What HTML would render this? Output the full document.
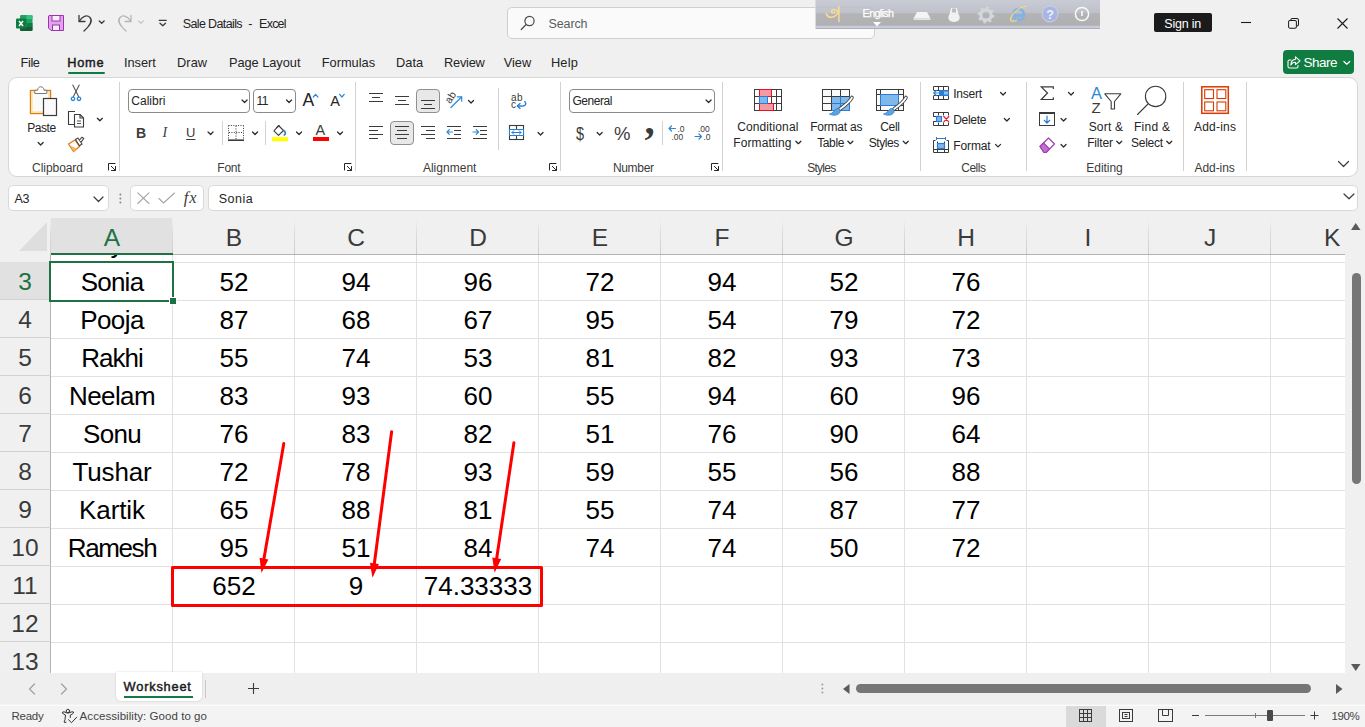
<!DOCTYPE html>
<html lang="en">
<head>
<meta charset="utf-8">
<title>Sale Datails - Excel</title>
<style>
*{box-sizing:border-box;margin:0;padding:0}
html,body{width:1365px;height:727px;overflow:hidden}
body{background:#f0f0f0;font-family:"Liberation Sans",sans-serif;color:#242424;position:relative;font-size:13px}
.a{position:absolute}
.t{position:absolute;white-space:nowrap;line-height:1;font-size:13px;letter-spacing:.25px;color:#242424}
svg{position:absolute;overflow:visible}
.c{text-align:center}
/* ribbon */
#ribbon{left:8px;top:77px;width:1350px;height:100px;background:#fff;border:1px solid #d6d6d6;border-radius:9px}
.sep{position:absolute;width:1px;background:#d2d2d2;top:82px;height:89px}
.gl{position:absolute;white-space:nowrap;line-height:1;font-size:13px;letter-spacing:.3px;color:#3b3b3b;top:160px}
.box{position:absolute;background:#fff;border:1px solid #8a8a8a;border-radius:4px}
/* grid */
#grid{left:0;top:218px;width:1345px;height:455px;background:#fff;overflow:hidden}
.ch{position:absolute;top:0;height:37px;background-color:#f0f0f0;background-image:linear-gradient(to bottom,#efefef 6%,#dcdcdc 45%,#cdcdcd 100%);background-size:1px 100%;background-position:right top;background-repeat:no-repeat;border-bottom:1px solid #b4b4b4;font-size:24.5px;line-height:39.500px;text-align:center;color:#3a3a3a}
.rh{position:absolute;left:0;width:51px;background:#f0f0f0;border-right:1px solid #b4b4b4;border-bottom:1px solid #d2d2d2;font-size:24.5px;text-align:center;color:#3a3a3a;height:38px;line-height:40px}
.vl{position:absolute;top:37px;width:1px;height:420px;background:#e1e1e1}
.hl{position:absolute;left:51px;width:1295px;height:1px;background:#e1e1e1}
.cell{position:absolute;width:122px;height:38px;line-height:40px;text-align:center;font-size:26px;color:#000;white-space:nowrap}
</style>
</head>
<body>
<!-- ===== TITLE BAR ===== -->
<div id="titlebar" class="a" style="left:0;top:0;width:1365px;height:46px">
<!-- excel logo -->
<svg style="left:16px;top:15px" width="17" height="17" viewBox="0 0 17 17">
<rect x="4" y="0" width="12.500" height="16" rx="1.200" fill="#21a366"/>
<path d="M10.500 0H15.300Q16.500 0 16.500 1.200V4H10.500Z" fill="#33c481"/>
<rect x="4" y="4" width="6.500" height="4" fill="#107c41"/>
<rect x="10.500" y="8" width="6" height="4" fill="#107c41"/>
<path d="M4 12H16.500V14.800Q16.500 16 15.300 16H5.200Q4 16 4 14.800Z" fill="#185c37"/>
<rect x="0" y="3.5" width="10" height="10" rx="1" fill="#107c41"/>
<path d="M3 6L7 11M7 6L3 11" stroke="#fff" stroke-width="1.5"/>
</svg>
<!-- save -->
<svg style="left:48px;top:15px" width="17" height="17" viewBox="0 0 17 17">
<path d="M1 .5H15.5V15.5H3L.5 13V1Z" fill="#dda6e6" stroke="#a42eb8" stroke-width="1"/>
<rect x="4" y=".5" width="8" height="5.5" fill="#f6eef8" stroke="#a42eb8"/>
<rect x="4.5" y="10" width="7" height="5.5" fill="#f6eef8" stroke="#a42eb8"/>
</svg>
<!-- undo -->
<svg style="left:77px;top:13px" width="30" height="20" viewBox="0 0 30 20" fill="none" stroke="#3b3b3b" stroke-width="1.3" stroke-linecap="round" stroke-linejoin="round">
<path d="M2 2.5V8.5H8"/><path d="M2.3 8.3C5 3 10 1.5 13 4.5C16 8 13.5 12 7 18"/>
<path d="M22.300 8L24.700 10.300L27.100 8" stroke-width="1.400"/>
</svg>
<!-- redo -->
<svg style="left:115px;top:13px" width="32" height="20" viewBox="0 0 32 20" fill="none" stroke="#b4b4b4" stroke-width="1.3" stroke-linecap="round" stroke-linejoin="round">
<path d="M16 2.5V8.5H10"/><path d="M15.7 8.3C13 3 8 1.5 5 4.5C2 8 4.5 12 11 18"/>
<path d="M23.500 8L25.900 10.300L28.300 8" stroke="#c8c8c8"/>
</svg>
<!-- customize -->
<svg style="left:158px;top:18px" width="10" height="10" viewBox="0 0 10 10" fill="none" stroke="#3b3b3b" stroke-width="1.3" stroke-linecap="round" stroke-linejoin="round">
<path d="M1.200 2.300H8.300"/><path d="M2 5.200L4.750 7.700L7.500 5.200"/>
</svg>
<div class="t" style="left:182.7px;top:18.3px;font-size:12.5px;letter-spacing:-0.62px">Sale Datails</div>
<div class="t" style="left:248.2px;top:18.3px;font-size:12.5px;letter-spacing:0.04px;letter-spacing:0">-</div>
<div class="t" style="left:259.1px;top:18.3px;font-size:12.5px;letter-spacing:-0.77px">Excel</div>
<!-- search -->
<div class="a" style="left:507px;top:7px;width:368px;height:32px;background:#fafafa;border:1px solid #cfcfcf;border-radius:5px"></div>
<svg style="left:520px;top:15px" width="16" height="16" viewBox="0 0 16 16" fill="none" stroke="#4a4a4a" stroke-width="1.2" stroke-linecap="round"><circle cx="9.5" cy="6" r="4.6"/><path d="M6.2 9.5L1.2 14.5"/></svg>
<div class="t" style="left:548.6px;top:18.3px;font-size:12.5px;letter-spacing:-0.13px;color:#5c5c5c">Search</div>
<!-- language bar overlay -->
<div class="a" style="left:815px;top:0;width:285px;height:29px;background:linear-gradient(#c5c8d2 0,#babdc6 44%,#aeaeb1 47%,#a9a9ab 87%,#c3c7d6 91%,#c6cad9 96%,#8f8f93 100%);opacity:.9;border-left:1px solid #d6d8de"></div>
<svg style="left:825px;top:5px" width="18" height="18" viewBox="0 0 18 18" fill="none" stroke="#f6dd92" stroke-width="1.500" stroke-linecap="round"><path d="M1.200 8.800C3.500 13.500 10 14 13.500 6.500"/><path d="M13.200 7C11 3.500 6.500 4 6.500 6.500C6.500 8.500 9 8.500 9.500 7"/><path d="M13.900 1.500V16.500"/></svg>
<div class="t" style="left:862.6px;top:7.8px;font-size:10.8px;letter-spacing:-0.65px;color:#fff;-webkit-text-stroke:.25px #fff">English</div>
<svg style="left:873px;top:22px" width="8" height="5"><path d="M0 0H8L4 4.5Z" fill="#fff"/></svg>
<svg style="left:913px;top:11px" width="18" height="10" viewBox="0 0 18 10"><path d="M4 1H14L17.5 7.5H.5Z" fill="#f4f4f4"/><path d="M.5 7.5H17.5V9H.5Z" fill="#e4e4e4"/></svg>
<svg style="left:947px;top:7px" width="14" height="16" viewBox="0 0 14 16"><path d="M4 1H10L11.5 7C14 11 12.5 15 7 15C1.500 15 0 11 2.500 7Z" fill="#f1f1f1"/><path d="M6 1.500V5.500M8 1.500V5.500" stroke="#888" stroke-width="1"/></svg>
<svg style="left:977px;top:6px" width="18" height="18" viewBox="0 0 18 18"><circle cx="9" cy="9" r="5.2" fill="none" stroke="#d4d6da" stroke-width="3.2"/><circle cx="9" cy="9" r="7.2" fill="none" stroke="#d4d6da" stroke-width="2.4" stroke-dasharray="2.6 3.05"/></svg>
<svg style="left:1009px;top:5px" width="20" height="18" viewBox="0 0 20 18" fill="none"><path d="M4.500 10.500H15C15 6 12.500 4 9.800 4C7 4 4.500 6 4.500 9.500C4.500 13 7 15 9.800 15C12 15 13.500 14 14.500 12.500" stroke="#7db3e8" stroke-width="2.600"/><path d="M17.500 1.500C12 0 2 9 1.500 14.500C1.500 17 5 16.500 8 15" stroke="#f1d68c" stroke-width="1.300"/></svg>
<svg style="left:1041px;top:5px" width="18" height="18" viewBox="0 0 18 18"><circle cx="9" cy="9" r="8" fill="#a9b6e2" stroke="#c9d0ec" stroke-width="1"/><text x="9" y="13.500" font-family="Liberation Sans, sans-serif" font-size="12.500" font-weight="bold" fill="#eef0fa" text-anchor="middle">?</text></svg>
<svg style="left:1074px;top:6px" width="16" height="16" viewBox="0 0 16 16" fill="none" stroke="#fafafa"><circle cx="8" cy="8" r="6.600" stroke-width="1.500"/><path d="M8 5V10" stroke-width="1.600"/></svg>
<!-- sign in -->
<div class="a" style="left:1154px;top:13px;width:58px;height:19px;background:#1b1b1b;border-radius:2px"></div>
<div class="t" style="left:1164.3px;top:17.5px;font-size:12.5px;letter-spacing:-0.20px;color:#fff">Sign in</div>
<!-- window buttons -->
<svg style="left:1240px;top:17px" width="12" height="12"><path d="M1 5.500H11" stroke="#1b1b1b" stroke-width="1.100"/></svg>
<svg style="left:1288px;top:17.500px" width="12" height="11" viewBox="0 0 13 12" fill="none" stroke="#1b1b1b" stroke-width="1.100"><rect x=".6" y="2.600" width="8.500" height="8.500" rx="1.600"/><path d="M3 2.400C3 1.200 3.800 .6 4.800 .6H9.500C10.800 .6 11.400 1.400 11.400 2.500V7C11.400 8 10.800 8.700 9.600 8.800"/></svg>
<svg style="left:1337px;top:17.500px" width="12" height="12"><path d="M.5 .5L10.500 10.500M10.500 .5L.5 10.500" stroke="#1b1b1b" stroke-width="1.100"/></svg>

</div><!--/titlebar-->
<!-- ===== TABS ===== -->
<div id="tabs" class="a" style="left:0;top:46px;width:1365px;height:31px">
<div class="t" style="left:20.6px;top:10.9px;font-size:12.8px;letter-spacing:-0.41px">File</div>
<div class="t" style="left:67.2px;top:10.9px;font-size:12.8px;letter-spacing:0.76px;color:#1b1b1b;-webkit-text-stroke:.45px #1b1b1b">Home</div>
<div class="t" style="left:123.9px;top:10.9px;font-size:12.8px;letter-spacing:-0.00px">Insert</div>
<div class="t" style="left:177.1px;top:10.9px;font-size:12.8px;letter-spacing:0.03px">Draw</div>
<div class="t" style="left:228.9px;top:10.9px;font-size:12.8px;letter-spacing:-0.03px">Page Layout</div>
<div class="t" style="left:321.7px;top:10.9px;font-size:12.8px;letter-spacing:0.02px">Formulas</div>
<div class="t" style="left:396.0px;top:10.9px;font-size:12.8px;letter-spacing:0.02px">Data</div>
<div class="t" style="left:444.1px;top:10.9px;font-size:12.8px;letter-spacing:-0.26px">Review</div>
<div class="t" style="left:503.7px;top:10.9px;font-size:12.8px;letter-spacing:0.02px">View</div>
<div class="t" style="left:550.9px;top:10.9px;font-size:12.8px;letter-spacing:0.22px">Help</div>
<div class="a" style="left:67.500px;top:25.700px;width:37px;height:2.400px;border-radius:1.200px;background:#107c41"></div>
<!-- share -->
<div class="a" style="left:1283px;top:4px;width:71px;height:24px;background:#107c41;border-radius:4px"></div>
<svg style="left:1287px;top:10px" width="14" height="13" viewBox="0 0 14 13" fill="none" stroke="#fff" stroke-width="1.100" stroke-linejoin="round" stroke-linecap="round"><path d="M4 4H2.500C1.600 4 1 4.600 1 5.500V10.500C1 11.400 1.600 12 2.500 12H9.500C10.400 12 11 11.400 11 10.500V9.500"/><path d="M8.500 .8L13 4.800L8.500 8.600V6.300C6 6.300 4.600 7.300 3.800 9C4 5.800 5.800 3.600 8.500 3.300Z"/></svg>
<div class="t" style="left:1303.6px;top:9.5px;font-size:13.5px;letter-spacing:-0.54px;color:#fff">Share</div>
<svg style="left:1342px;top:14px" width="9" height="6" fill="none" stroke="#fff" stroke-width="1.200" stroke-linecap="round" stroke-linejoin="round"><path d="M1.900 1.500L4.800 4.200L7.700 1.500"/></svg>

</div><!--/tabs-->
<!-- ===== RIBBON ===== -->
<div id="ribbon" class="a"></div>
<div id="rc" class="a" style="left:0;top:0;width:1365px;height:0">
<svg style="left:29px;top:85px" width="29" height="32" viewBox="0 0 29 32" fill="none">
<rect x="1.500" y="5.500" width="20" height="23" fill="#fafafa" stroke="#e07b10" stroke-width="1.400"/>
<rect x="3" y="7" width="17" height="20" fill="none" stroke="#fbe3a8" stroke-width="1.400"/>
<path d="M5.800 8.500V5.200H8.600C8.600 0.600 15 0.600 15 5.200H17.800V8.500Z" fill="#fff" stroke="#7a7a7a" stroke-width="1"/>
<rect x="14.500" y="13.500" width="13" height="17" fill="#fafafa" stroke="#3b3b3b" stroke-width="1.200"/>
</svg>
<div class="t" style="left:27.3px;top:122.4px;font-size:12px;letter-spacing:-0.48px">Paste</div>
<svg style="left:37px;top:141px" width="9" height="6" fill="none" stroke="#2a2a2a" stroke-width="1.25" stroke-linecap="round" stroke-linejoin="round"><path d="M1.15 1.50L3.65 4.00L6.15 1.50"/></svg>
<svg style="left:70px;top:84px" width="12" height="18" viewBox="0 0 12 18" fill="none" stroke-linecap="round">
<path d="M2.800 1L8.800 13" stroke="#555" stroke-width="1.100"/><path d="M9.200 1L3.200 13" stroke="#555" stroke-width="1.100"/>
<circle cx="3" cy="14.800" r="1.700" stroke="#2b88d8" stroke-width="1.300"/><circle cx="9" cy="14.800" r="1.700" stroke="#2b88d8" stroke-width="1.300"/></svg>
<svg style="left:67px;top:110px" width="18" height="18" viewBox="0 0 18 18" fill="none" stroke="#3b3b3b" stroke-width="1.100" stroke-linejoin="round">
<path d="M7 14.500H1.500V1.500H8"/><path d="M7.500 4.500H13L16.500 8V17H7.500Z" fill="#fff"/><path d="M13 4.500V8H16.500"/><path d="M10 11H14M10 13.500H14" stroke-width=".9"/></svg>
<svg style="left:96px;top:117px" width="9" height="6" fill="none" stroke="#2a2a2a" stroke-width="1.25" stroke-linecap="round" stroke-linejoin="round"><path d="M1.35 1.30L3.85 3.80L6.35 1.30"/></svg>
<svg style="left:67px;top:136px" width="18" height="17" viewBox="0 0 18 17" fill="none" stroke-linejoin="round" stroke-linecap="round">
<path d="M1.500 8L8 4L12.500 10.500L6.500 15.500Z" fill="#fff" stroke="#e07b10" stroke-width="1.300"/>
<path d="M3.500 9.500L9.500 12.800L6.500 15.500Z" fill="#f5b565" stroke="none"/>
<path d="M8.500 3.500L11 2L15 8L12.500 9.800Z" fill="#fff" stroke="#444" stroke-width="1.100"/>
<path d="M12.500 4L15 1.200L16.800 2.500L14.300 5.800" stroke="#444" stroke-width="1.100" fill="#fff"/></svg>
<div class="gl" style="left:32.1px;top:161.9px;font-size:12px;letter-spacing:-0.06px">Clipboard</div>
<svg style="left:108px;top:163px" width="9" height="9" viewBox="0 0 9 9" fill="none" stroke="#262626" stroke-width="1" stroke-linecap="round" stroke-linejoin="round"><path d="M.5 7V.5H7"/><path d="M3.300 3.300L7.300 7.300"/><path d="M7.500 3.500V7.500H3.500"/></svg>
<div class="sep" style="left:119px"></div>
<div class="box" style="left:128px;top:89px;width:122px;height:24px"></div>
<div class="t" style="left:131.3px;top:95.2px;font-size:12px;letter-spacing:0.01px">Calibri</div>
<svg style="left:241px;top:99px" width="9" height="6" fill="none" stroke="#2a2a2a" stroke-width="1.25" stroke-linecap="round" stroke-linejoin="round"><path d="M1.05 1.00L3.55 3.50L6.05 1.00"/></svg>
<div class="box" style="left:253px;top:89px;width:43px;height:24px"></div>
<div class="t" style="left:256.4px;top:95.2px;font-size:12px;letter-spacing:-0.48px">11</div>
<svg style="left:285px;top:99px" width="9" height="6" fill="none" stroke="#2a2a2a" stroke-width="1.25" stroke-linecap="round" stroke-linejoin="round"><path d="M1.55 1.00L4.05 3.50L6.55 1.00"/></svg>
<div class="t" style="left:302.6px;top:91.6px;font-size:17.5px;letter-spacing:-0.07px;letter-spacing:0">A</div>
<svg style="left:312px;top:93px" width="8" height="6" fill="none" stroke="#2b88d8" stroke-width="1.200" stroke-linecap="round" stroke-linejoin="round"><path d="M1.300 4L3.600 1.300L5.900 4"/></svg>
<div class="t" style="left:330.2px;top:94.1px;font-size:14.5px;letter-spacing:0.03px;letter-spacing:0">A</div>
<svg style="left:338px;top:93px" width="8" height="6" fill="none" stroke="#2b88d8" stroke-width="1.200" stroke-linecap="round" stroke-linejoin="round"><path d="M1.600 1.300L3.900 4L6.200 1.300"/></svg>
<div class="t" style="left:136.1px;top:125.8px;font-size:14px;letter-spacing:-0.80px;font-weight:bold;color:#3b3b3b">B</div>
<div class="t" style="left:162.6px;top:125.8px;font-size:14px;letter-spacing:0.80px;font-style:italic;font-family:'Liberation Serif',serif;color:#3b3b3b">I</div>
<div class="t" style="left:186.1px;top:126.4px;font-size:13px;letter-spacing:-0.09px;color:#3b3b3b;text-decoration:underline;text-underline-offset:1.500px">U</div>
<svg style="left:207px;top:131px" width="9" height="6" fill="none" stroke="#2a2a2a" stroke-width="1.25" stroke-linecap="round" stroke-linejoin="round"><path d="M1.05 1.00L3.55 3.50L6.05 1.00"/></svg>
<div class="sep" style="left:222px;top:121px;height:24px"></div>
<svg style="left:228px;top:125px" width="16" height="16" viewBox="0 0 16 16" fill="none" stroke="#3b3b3b">
<path d="M.5 .5H15.500M.5 .5V15M15.500 .5V15M8 1V15M1 7.500H15.500" stroke-width="1" stroke-dasharray="1 1.400"/>
<path d="M0 15.200H16" stroke-width="1.600"/></svg>
<svg style="left:251px;top:131px" width="9" height="6" fill="none" stroke="#2a2a2a" stroke-width="1.25" stroke-linecap="round" stroke-linejoin="round"><path d="M1.55 1.00L4.05 3.50L6.55 1.00"/></svg>
<div class="sep" style="left:265px;top:121px;height:24px"></div>
<svg style="left:271px;top:124px" width="18" height="18" viewBox="0 0 18 18" fill="none" stroke-linejoin="round" stroke-linecap="round">
<path d="M7.500 1.500L12.500 6.500L7.500 11.300L3 6.800Z" stroke="#3b3b3b" stroke-width="1.100" fill="#fff"/>
<path d="M5.500 4L8 1.500" stroke="#3b3b3b" stroke-width="1.100"/>
<path d="M12.800 6.500C14.800 8 14.800 10 13.300 11" stroke="#2b7cd3" stroke-width="1.600"/>
<rect x="1" y="13.200" width="16" height="4" fill="#ffff00"/></svg>
<svg style="left:295px;top:131px" width="9" height="6" fill="none" stroke="#2a2a2a" stroke-width="1.25" stroke-linecap="round" stroke-linejoin="round"><path d="M1.55 1.00L4.05 3.50L6.55 1.00"/></svg>
<div class="t" style="left:315.6px;top:123.3px;font-size:14.5px;letter-spacing:0.80px;color:#3b3b3b;letter-spacing:0">A</div>
<div class="a" style="left:313px;top:137px;width:16px;height:4px;background:#ff0000"></div>
<svg style="left:336px;top:131px" width="9" height="6" fill="none" stroke="#2a2a2a" stroke-width="1.25" stroke-linecap="round" stroke-linejoin="round"><path d="M1.55 1.00L4.05 3.50L6.55 1.00"/></svg>
<div class="gl" style="left:217.3px;top:161.9px;font-size:12px;letter-spacing:-0.23px">Font</div>
<svg style="left:344px;top:163px" width="9" height="9" viewBox="0 0 9 9" fill="none" stroke="#262626" stroke-width="1" stroke-linecap="round" stroke-linejoin="round"><path d="M.5 7V.5H7"/><path d="M3.300 3.300L7.300 7.300"/><path d="M7.500 3.500V7.500H3.500"/></svg>
<div class="sep" style="left:355px"></div><svg style="left:369px;top:92px" width="14" height="11" fill="none" stroke="#3b3b3b" stroke-width="1" shape-rendering="crispEdges"><path d="M0 1.5H14M3 5.5H11M0 9.5H14"/></svg>
<svg style="left:395px;top:95px" width="14" height="11" fill="none" stroke="#3b3b3b" stroke-width="1" shape-rendering="crispEdges"><path d="M0 1.5H14M3 5.5H11M0 9.5H14"/></svg>
<div class="box" style="left:416px;top:89px;width:24px;height:24px;background:#e8e8e8;border-color:#8f8f8f"></div>
<svg style="left:421px;top:99px" width="14" height="11" fill="none" stroke="#3b3b3b" stroke-width="1" shape-rendering="crispEdges"><path d="M0 1.5H14M3 5.5H11M0 9.5H14"/></svg>
<svg style="left:445px;top:91px" width="20" height="19" viewBox="0 0 20 19" fill="none">
<text x="0" y="0" transform="translate(5.300 13.300) rotate(-58)" font-family="Liberation Sans, sans-serif" font-size="10.500" fill="#3b3b3b">ab</text>
<path d="M6 16.500L16.500 6" stroke="#2b88d8" stroke-width="1.200" stroke-linecap="round"/><path d="M12.300 5.800H16.700V10.200" stroke="#2b88d8" stroke-width="1.200" stroke-linecap="round" stroke-linejoin="round"/></svg>
<svg style="left:467px;top:99px" width="9" height="6" fill="none" stroke="#2a2a2a" stroke-width="1.25" stroke-linecap="round" stroke-linejoin="round"><path d="M1.55 1.50L4.05 4.00L6.55 1.50"/></svg>
<div class="sep" style="left:498px;top:88px;height:62px"></div>
<svg style="left:510px;top:92px" width="18" height="18" viewBox="0 0 18 18" fill="none">
<text x="1" y="9" font-family="Liberation Sans, sans-serif" font-size="10" fill="#3b3b3b" letter-spacing=".5">ab</text>
<text x="1" y="16.300" font-family="Liberation Sans, sans-serif" font-size="10" fill="#3b3b3b">c</text>
<path d="M14.800 9.500C17 11.500 15.500 14.500 12 14H7.500" stroke="#2b7cd3" stroke-width="1.300" stroke-linecap="round"/><path d="M10 11.500L7.300 14L10 16.500" stroke="#2b7cd3" stroke-width="1.300" stroke-linecap="round" stroke-linejoin="round"/></svg>
<svg style="left:369px;top:125px" width="14" height="15" fill="none" stroke="#3b3b3b" stroke-width="1" shape-rendering="crispEdges"><path d="M0 1.5H14M0 5.5H9M0 9.5H14M0 13.5H9"/></svg>
<div class="box" style="left:390px;top:121px;width:24px;height:24px;background:#e8e8e8;border-color:#8f8f8f"></div>
<svg style="left:395px;top:125px" width="14" height="15" fill="none" stroke="#3b3b3b" stroke-width="1" shape-rendering="crispEdges"><path d="M0 1.5H14M2 5.5H12M0 9.5H14M2 13.5H12"/></svg>
<svg style="left:421px;top:125px" width="14" height="15" fill="none" stroke="#3b3b3b" stroke-width="1" shape-rendering="crispEdges"><path d="M0 1.5H14M5 5.5H14M0 9.5H14M5 13.5H14"/></svg>
<svg style="left:447px;top:125px" width="14" height="15" fill="none" stroke="#3b3b3b" stroke-width="1" shape-rendering="crispEdges"><path d="M0 1.5H14M7 5.5H14M7 9.5H14M0 13.5H14"/></svg>
<svg style="left:446px;top:128px" width="8" height="8" fill="none" stroke="#2b88d8" stroke-width="1.200" stroke-linecap="round" stroke-linejoin="round"><path d="M1 4H6.500M3.300 1.700L1 4L3.300 6.300"/></svg>
<svg style="left:473px;top:125px" width="14" height="15" fill="none" stroke="#3b3b3b" stroke-width="1" shape-rendering="crispEdges"><path d="M0 1.5H14M7 5.5H14M7 9.5H14M0 13.5H14"/></svg>
<svg style="left:472px;top:128px" width="8" height="8" fill="none" stroke="#2b88d8" stroke-width="1.200" stroke-linecap="round" stroke-linejoin="round"><path d="M1 4H6.500M4.200 1.700L6.500 4L4.200 6.300"/></svg>
<svg style="left:508px;top:124px" width="17" height="17" viewBox="0 0 17 17" fill="none">
<rect x="1.500" y="1.500" width="14" height="14" stroke="#3b3b3b" stroke-width="1.100"/><path d="M8.500 1.500V5M8.500 12V15.500" stroke="#3b3b3b" stroke-width="1.100"/>
<rect x="1.500" y="5.500" width="14" height="6" fill="#fff" stroke="#2b7cd3" stroke-width="1"/>
<path d="M4 8.500H13M5.800 6.700L4 8.500L5.800 10.300M11.200 6.700L13 8.500L11.200 10.300" stroke="#2b7cd3" stroke-width="1" stroke-linecap="round" stroke-linejoin="round"/></svg>
<svg style="left:537px;top:131px" width="9" height="6" fill="none" stroke="#2a2a2a" stroke-width="1.25" stroke-linecap="round" stroke-linejoin="round"><path d="M1.05 1.50L3.55 4.00L6.05 1.50"/></svg>
<div class="gl" style="left:422.9px;top:161.9px;font-size:12px;letter-spacing:0.02px">Alignment</div>
<svg style="left:549px;top:163px" width="9" height="9" viewBox="0 0 9 9" fill="none" stroke="#262626" stroke-width="1" stroke-linecap="round" stroke-linejoin="round"><path d="M.5 7V.5H7"/><path d="M3.300 3.300L7.300 7.300"/><path d="M7.500 3.500V7.500H3.500"/></svg>
<div class="sep" style="left:560px"></div>
<div class="box" style="left:569px;top:89px;width:146px;height:24px"></div>
<div class="t" style="left:572.5px;top:95.2px;font-size:12px;letter-spacing:-0.46px">General</div>
<svg style="left:705px;top:99px" width="9" height="6" fill="none" stroke="#2a2a2a" stroke-width="1.25" stroke-linecap="round" stroke-linejoin="round"><path d="M1.05 1.00L3.55 3.50L6.05 1.00"/></svg>
<div class="t" style="left:576.0px;top:128.1px;font-size:14.5px;letter-spacing:0.54px;color:#3b3b3b;letter-spacing:0;transform:scaleY(1.3);transform-origin:50% 85%">$</div>
<svg style="left:596px;top:131px" width="9" height="6" fill="none" stroke="#2a2a2a" stroke-width="1.25" stroke-linecap="round" stroke-linejoin="round"><path d="M1.15 1.50L3.65 4.00L6.15 1.50"/></svg>
<div class="t" style="left:614.1px;top:125.0px;font-size:18.5px;letter-spacing:-0.55px;color:#3b3b3b;letter-spacing:0">%</div>
<div class="t" style="left:644.4px;top:100.0px;font-size:41px;letter-spacing:-0.75px;font-weight:bold;font-family:'Liberation Serif',serif;color:#3b3b3b;letter-spacing:0">,</div>
<div class="sep" style="left:662px;top:121px;height:24px"></div>
<svg style="left:668px;top:124px" width="18" height="17" viewBox="0 0 18 17" fill="none">
<text x="9.500" y="7.500" font-family="Liberation Sans, sans-serif" font-size="8.500" fill="#3b3b3b">.0</text>
<text x="3.500" y="15.500" font-family="Liberation Sans, sans-serif" font-size="8.500" fill="#3b3b3b">.00</text>
<path d="M1 4.500H7.500M3.500 2L1 4.500L3.500 7" stroke="#2b88d8" stroke-width="1.200" stroke-linecap="round" stroke-linejoin="round"/></svg>
<svg style="left:694px;top:124px" width="18" height="17" viewBox="0 0 18 17" fill="none">
<text x="4" y="7.500" font-family="Liberation Sans, sans-serif" font-size="8.500" fill="#3b3b3b">.00</text>
<text x="9.500" y="15.500" font-family="Liberation Sans, sans-serif" font-size="8.500" fill="#3b3b3b">.0</text>
<path d="M1 12.500H7.500M5 10L7.500 12.500L5 15" stroke="#2b88d8" stroke-width="1.200" stroke-linecap="round" stroke-linejoin="round"/></svg>
<div class="gl" style="left:612.9px;top:161.9px;font-size:12px;letter-spacing:-0.31px">Number</div>
<svg style="left:711px;top:163px" width="9" height="9" viewBox="0 0 9 9" fill="none" stroke="#262626" stroke-width="1" stroke-linecap="round" stroke-linejoin="round"><path d="M.5 7V.5H7"/><path d="M3.300 3.300L7.300 7.300"/><path d="M7.500 3.500V7.500H3.500"/></svg>
<div class="sep" style="left:722px"></div><svg style="left:754px;top:89px" width="28" height="22" viewBox="0 0 28 22" fill="none">
<rect x=".5" y=".5" width="27" height="21" fill="#fff" stroke="#3b3b3b" stroke-width="1"/>
<path d="M5.500 .5V21.500M17.500 .5V21.500M22.500 .5V21.500M.5 7.500H27.500M.5 14.500H27.500" stroke="#3b3b3b" stroke-width="1"/>
<rect x="5.500" y=".5" width="12" height="7" fill="#f59aa3" stroke="#e81123" stroke-width="1"/>
<rect x="5.500" y="14.500" width="14" height="7" fill="#f59aa3" stroke="#e81123" stroke-width="1"/>
<rect x="5.500" y="7.500" width="8" height="7" fill="#7fb8ea" stroke="#2b7cd3" stroke-width="1"/>
</svg>
<div class="t" style="left:737.2px;top:121.4px;font-size:12px;letter-spacing:0.11px">Conditional</div>
<div class="t" style="left:733.3px;top:137.3px;font-size:12px;letter-spacing:0.09px">Formatting</div>
<svg style="left:794px;top:140px" width="9" height="6" fill="none" stroke="#2a2a2a" stroke-width="1.25" stroke-linecap="round" stroke-linejoin="round"><path d="M1.85 1.20L4.35 3.70L6.85 1.20"/></svg>
<svg style="left:822px;top:89px" width="33" height="28" viewBox="0 0 33 28" fill="none">
<rect x=".5" y=".5" width="27" height="21" fill="#fafafa" stroke="#3b3b3b" stroke-width="1"/>
<rect x="9.500" y="7.500" width="18" height="14" fill="#7fb8ea" stroke="#2b7cd3" stroke-width="1"/>
<path d="M9.500 .5V21.500M18.500 .5V7.500M.5 7.500H27.500M.5 14.500H9.500" stroke="#3b3b3b" stroke-width="1"/>
<path d="M18.500 7.500V21.500M9.500 14.500H27.500" stroke="#2b7cd3" stroke-width="1"/>
<path d="M30 8.500C28 12.500 23 16.500 18 20" stroke="#3b3b3b" stroke-width="3.600" stroke-linecap="round"/>
<path d="M30 8.500C28 12.500 23 16.500 18 20" stroke="#fff" stroke-width="1.700" stroke-linecap="round"/>
<path d="M7.500 25C11 24.500 12 21.500 14 20C16.500 18.500 19.500 21 17.500 24C15 27 10 26.500 7.500 25Z" fill="#5ea3e0" stroke="#2b7cd3" stroke-width=".8"/>
</svg>
<div class="t" style="left:810.2px;top:121.4px;font-size:12px;letter-spacing:-0.21px">Format as</div>
<div class="t" style="left:817.2px;top:137.3px;font-size:12px;letter-spacing:-0.38px">Table</div>
<svg style="left:846px;top:140px" width="9" height="6" fill="none" stroke="#2a2a2a" stroke-width="1.25" stroke-linecap="round" stroke-linejoin="round"><path d="M1.85 1.20L4.35 3.70L6.85 1.20"/></svg>
<svg style="left:876px;top:89px" width="33" height="28" viewBox="0 0 33 28" fill="none">
<rect x=".5" y=".5" width="27" height="21" fill="#fafafa" stroke="#3b3b3b" stroke-width="1"/>
<path d="M4.500 .5V21.500M22.500 .5V21.500M.5 5.500H27.500M.5 16.500H27.500" stroke="#3b3b3b" stroke-width="1"/>
<rect x="4.500" y="5.500" width="18" height="11" fill="#7fb8ea" stroke="#2b7cd3" stroke-width="1"/>
<path d="M30 8.500C28 12.500 23 16.500 18 20" stroke="#3b3b3b" stroke-width="3.600" stroke-linecap="round"/>
<path d="M30 8.500C28 12.500 23 16.500 18 20" stroke="#fff" stroke-width="1.700" stroke-linecap="round"/>
<path d="M7.500 25C11 24.500 12 21.500 14 20C16.500 18.500 19.500 21 17.500 24C15 27 10 26.500 7.500 25Z" fill="#5ea3e0" stroke="#2b7cd3" stroke-width=".8"/>
</svg>
<div class="t" style="left:880.2px;top:121.4px;font-size:12px;letter-spacing:-0.32px">Cell</div>
<div class="t" style="left:868.8px;top:137.3px;font-size:12px;letter-spacing:-0.43px">Styles</div>
<svg style="left:902px;top:140px" width="9" height="6" fill="none" stroke="#2a2a2a" stroke-width="1.25" stroke-linecap="round" stroke-linejoin="round"><path d="M1.25 1.20L3.75 3.70L6.25 1.20"/></svg>
<div class="gl" style="left:807.3px;top:161.9px;font-size:12px;letter-spacing:-0.76px">Styles</div>
<div class="sep" style="left:920px"></div>
<svg style="left:933px;top:86px" width="17" height="14" viewBox="0 0 17 14" fill="none">
<path d="M.5 4V.5H15.500V13.500H.5V10" stroke="#3b3b3b" stroke-width="1"/><path d="M5.500 .5V4M10.500 .5V4M5.500 10V13.500M10.500 10V13.500M.5 4.500H6M.5 9.500H6" stroke="#3b3b3b" stroke-width="1"/>
<rect x="0" y="5" width="6" height="4" fill="#fff"/>
<rect x="6.500" y="4.500" width="9" height="5" fill="#2b7cd3" stroke="#2b7cd3" stroke-width="1"/><rect x="11" y="5.500" width="4" height="3" fill="#8fc1ee"/>
<path d="M.8 7H8M3.300 4.500L.8 7L3.300 9.500" stroke="#2b88d8" stroke-width="1.200" stroke-linecap="round" stroke-linejoin="round"/></svg>
<div class="t" style="left:953.2px;top:88.2px;font-size:12px;letter-spacing:-0.24px">Insert</div>
<svg style="left:999px;top:91px" width="9" height="6" fill="none" stroke="#2a2a2a" stroke-width="1.25" stroke-linecap="round" stroke-linejoin="round"><path d="M1.55 1.50L4.05 4.00L6.55 1.50"/></svg>
<svg style="left:933px;top:112px" width="17" height="14" viewBox="0 0 17 14" fill="none">
<path d="M.5 4V.5H15.500V4M.5 10V13.500H15.500V10" stroke="#3b3b3b" stroke-width="1"/><path d="M5.500 .5V4M10.500 .5V4M5.500 10V13.500M10.500 10V13.500M.5 4.500H15.500M.5 9.500H15.500M.5 4.500H3.500V9.500H.5" stroke="#3b3b3b" stroke-width="1"/>
<rect x="2.500" y="3.500" width="14" height="7" fill="#fff"/><path d="M.5 4.500H3M.5 9.500H3" stroke="#3b3b3b"/>
<rect x="3.500" y="4.500" width="5" height="5" fill="#7fb8ea" stroke="#2b7cd3" stroke-width="1.200"/>
<path d="M10.800 4.500L15.800 9.800M15.800 4.500L10.800 9.800" stroke="#e8212e" stroke-width="1.200" stroke-linecap="round"/></svg>
<div class="t" style="left:953.2px;top:114.3px;font-size:12px;letter-spacing:-0.28px">Delete</div>
<svg style="left:1003px;top:117px" width="9" height="6" fill="none" stroke="#2a2a2a" stroke-width="1.25" stroke-linecap="round" stroke-linejoin="round"><path d="M1.35 1.50L3.85 4.00L6.35 1.50"/></svg>
<svg style="left:933px;top:137px" width="17" height="16" viewBox="0 0 17 16" fill="none">
<path d="M3.500 1.500H12.500M3.500 0V3M12.500 0V3" stroke="#2b7cd3" stroke-width="1"/>
<path d="M2.500 3.500H.5V15.500H15.500V3.500H13.500" stroke="#3b3b3b" stroke-width="1"/><path d="M4.500 4.500V15.500M11.500 4.500V15.500M.5 12.500H15.500" stroke="#3b3b3b" stroke-width="1"/>
<rect x="4.500" y="6.500" width="7" height="5" fill="#7fb8ea" stroke="#2b7cd3" stroke-width="1.200"/></svg>
<div class="t" style="left:953.2px;top:140.2px;font-size:12px;letter-spacing:-0.10px">Format</div>
<svg style="left:994px;top:143px" width="9" height="6" fill="none" stroke="#2a2a2a" stroke-width="1.25" stroke-linecap="round" stroke-linejoin="round"><path d="M1.55 1.40L4.05 3.90L6.55 1.40"/></svg>
<div class="gl" style="left:961.3px;top:161.9px;font-size:12px;letter-spacing:-0.51px">Cells</div>
<div class="sep" style="left:1026px"></div>
<svg style="left:1040px;top:86px" width="15" height="15" viewBox="0 0 15 15" fill="none" stroke="#3b3b3b" stroke-width="1.200" stroke-linejoin="miter"><path d="M13.300 3V.8H1.300L7.500 7L1.300 13.500H13.300V11.300"/></svg>
<svg style="left:1067px;top:91px" width="9" height="6" fill="none" stroke="#2a2a2a" stroke-width="1.25" stroke-linecap="round" stroke-linejoin="round"><path d="M1.55 1.50L4.05 4.00L6.55 1.50"/></svg>
<svg style="left:1039px;top:112px" width="17" height="15" viewBox="0 0 17 15" fill="none">
<rect x=".5" y=".5" width="15" height="13" stroke="#3b3b3b" stroke-width="1"/><path d="M0 1H16" stroke="#3b3b3b" stroke-width="2"/>
<path d="M8 4V11M5.200 8.300L8 11L10.800 8.300" stroke="#2b7cd3" stroke-width="1.200" stroke-linecap="round" stroke-linejoin="round"/></svg>
<svg style="left:1060px;top:117px" width="9" height="6" fill="none" stroke="#2a2a2a" stroke-width="1.25" stroke-linecap="round" stroke-linejoin="round"><path d="M1.05 1.50L3.55 4.00L6.05 1.50"/></svg>
<svg style="left:1038.500px;top:137px" width="17" height="16" viewBox="0 0 17 16" fill="none" stroke-linejoin="round">
<path d="M1 9.500L9.500 1L15.500 7L7 15.500H5Z" fill="#fff" stroke="#a33fb5" stroke-width="1.200"/>
<path d="M1 9.500L4.500 6L10.500 12L7 15.500H5Z" fill="#c36fd0" stroke="#a33fb5" stroke-width="1.200"/></svg>
<svg style="left:1060px;top:143px" width="9" height="6" fill="none" stroke="#2a2a2a" stroke-width="1.25" stroke-linecap="round" stroke-linejoin="round"><path d="M1.05 1.50L3.55 4.00L6.05 1.50"/></svg>
<div class="t" style="left:1091.1px;top:85.2px;font-size:16.5px;letter-spacing:0.29px;color:#2b88d8;letter-spacing:0">A</div>
<div class="t" style="left:1091.6px;top:100.0px;font-size:15px;letter-spacing:0.14px;color:#3b3b3b;letter-spacing:0">Z</div>
<svg style="left:1103.500px;top:92.500px" width="18" height="17" viewBox="0 0 18 17" fill="none" stroke="#3b3b3b" stroke-width="1.100" stroke-linejoin="round"><path d="M.8 .8H16.800L10.500 8.500V16H7.200V8.500Z" fill="#fff"/></svg>
<div class="t" style="left:1088.7px;top:121.4px;font-size:12px;letter-spacing:0.18px">Sort &amp;</div>
<div class="t" style="left:1087.2px;top:137.3px;font-size:12px;letter-spacing:-0.16px">Filter</div>
<svg style="left:1115px;top:140px" width="9" height="6" fill="none" stroke="#2a2a2a" stroke-width="1.25" stroke-linecap="round" stroke-linejoin="round"><path d="M1.75 1.20L4.25 3.70L6.75 1.20"/></svg>
<svg style="left:1136px;top:85px" width="32" height="31" viewBox="0 0 32 31" fill="none" stroke="#3b3b3b" stroke-width="1.100" stroke-linecap="round"><circle cx="19.600" cy="11.400" r="10.200" fill="#fff"/><path d="M12 19L1.500 29.500"/></svg>
<div class="t" style="left:1134.0px;top:121.4px;font-size:12px;letter-spacing:0.25px">Find &amp;</div>
<div class="t" style="left:1131.0px;top:137.3px;font-size:12px;letter-spacing:-0.24px">Select</div>
<svg style="left:1165px;top:140px" width="9" height="6" fill="none" stroke="#2a2a2a" stroke-width="1.25" stroke-linecap="round" stroke-linejoin="round"><path d="M1.75 1.20L4.25 3.70L6.75 1.20"/></svg>
<div class="gl" style="left:1086.3px;top:161.9px;font-size:12px;letter-spacing:-0.04px">Editing</div>
<div class="sep" style="left:1183px"></div>
<svg style="left:1201px;top:86px" width="28" height="28" viewBox="0 0 28 28" fill="none" stroke="#d83b01">
<rect x=".8" y=".8" width="26.500" height="26.500" stroke-width="1.500"/>
<rect x="3.700" y="3.700" width="8.800" height="8.800" stroke-width="1.100"/><rect x="16" y="3.700" width="8.800" height="8.800" stroke-width="1.100"/>
<rect x="3.700" y="16" width="8.800" height="8.800" stroke-width="1.100"/><rect x="16" y="16" width="8.800" height="8.800" stroke-width="1.100"/></svg>
<div class="t" style="left:1194.0px;top:121.4px;font-size:12px;letter-spacing:0.22px">Add-ins</div>
<div class="gl" style="left:1194.6px;top:161.9px;font-size:12px;letter-spacing:-0.08px">Add-ins</div>
<div class="sep" style="left:1246px"></div>
<svg style="left:1337px;top:160px" width="13" height="8" fill="none" stroke="#3b3b3b" stroke-width="1.200" stroke-linecap="round" stroke-linejoin="round"><path d="M1.500 1.500L6.500 6.500L11.500 1.500"/></svg>
</div><!--/rc-->
<!-- ===== FORMULA BAR ===== -->
<div id="fbar" class="a" style="left:0;top:180px;width:1365px;height:38px">
<div class="a" style="left:8px;top:5px;width:101px;height:26px;background:#fff;border:1px solid #d9d9d9;border-radius:5px"></div>
<div class="t" style="left:14.6px;top:12.9px;font-size:12.5px;letter-spacing:-0.44px">A3</div>
<svg style="left:93px;top:15.500px" width="11" height="7" fill="none" stroke="#3b3b3b" stroke-width="1.200" stroke-linecap="round" stroke-linejoin="round"><path d="M1 1L5.500 5.500L10 1"/></svg>
<svg style="left:118.500px;top:13px" width="3" height="11" fill="#8a8a8a"><circle cx="1.400" cy="1.400" r="1"/><circle cx="1.400" cy="5.400" r="1"/><circle cx="1.400" cy="9.400" r="1"/></svg>
<div class="a" style="left:130px;top:5px;width:74px;height:26px;background:#fff;border:1px solid #d9d9d9;border-radius:5px"></div>
<svg style="left:137px;top:12px" width="13" height="12" fill="none" stroke="#a6a6a6" stroke-width="1.100" stroke-linecap="round"><path d="M.8 .8L12 11.500M12 .8L.8 11.500"/></svg>
<svg style="left:158px;top:12px" width="18" height="12" fill="none" stroke="#a6a6a6" stroke-width="1.100" stroke-linecap="round" stroke-linejoin="round"><path d="M1 6.500L5.500 11L16.500 1"/></svg>
<div class="t" style="left:183.8px;top:9.7px;font-size:16.5px;letter-spacing:0.80px;font-style:italic;font-family:'Liberation Serif',serif;color:#3b3b3b">fx</div>
<div class="a" style="left:208px;top:5px;width:1150px;height:26px;background:#fff;border:1px solid #d9d9d9;border-radius:5px"></div>
<div class="t" style="left:218.7px;top:12.9px;font-size:12.5px;letter-spacing:0.49px">Sonia</div>
<svg style="left:1342.500px;top:12.500px" width="12" height="7" fill="none" stroke="#3b3b3b" stroke-width="1.200" stroke-linecap="round" stroke-linejoin="round"><path d="M1 1L6 5.800L11 1"/></svg>
</div><!--/fbar-->
<!-- ===== GRID ===== -->
<div id="grid" class="a">
<div class="ch" style="left:0;width:51px;border-bottom:0;height:38px"></div>
<svg style="left:19px;top:4px" width="28" height="29"><path d="M28 0V29H0Z" fill="#dedede"/></svg>
<div class="ch" style="left:51px;width:122px;background-color:#e1e1e1;color:#1e7145;border-bottom:2px solid #1e7145">A</div>
<div class="ch" style="left:173px;width:122px">B</div>
<div class="ch" style="left:295px;width:122px">C</div>
<div class="ch" style="left:417px;width:122px">D</div>
<div class="ch" style="left:539px;width:122px">E</div>
<div class="ch" style="left:661px;width:122px">F</div>
<div class="ch" style="left:783px;width:122px">G</div>
<div class="ch" style="left:905px;width:122px">H</div>
<div class="ch" style="left:1027px;width:122px">I</div>
<div class="ch" style="left:1149px;width:122px">J</div>
<div class="ch" style="left:1271px;width:74px;background-image:none"><span style="position:absolute;left:53px;top:0">K</span></div>
<div class="vl" style="left:172px"></div>
<div class="vl" style="left:294px"></div>
<div class="vl" style="left:416px"></div>
<div class="vl" style="left:538px"></div>
<div class="vl" style="left:660px"></div>
<div class="vl" style="left:782px"></div>
<div class="vl" style="left:904px"></div>
<div class="vl" style="left:1026px"></div>
<div class="vl" style="left:1148px"></div>
<div class="vl" style="left:1270px"></div>
<div class="hl" style="top:44px"></div>
<div class="hl" style="top:82px"></div>
<div class="hl" style="top:120px"></div>
<div class="hl" style="top:158px"></div>
<div class="hl" style="top:196px"></div>
<div class="hl" style="top:234px"></div>
<div class="hl" style="top:272px"></div>
<div class="hl" style="top:310px"></div>
<div class="hl" style="top:348px"></div>
<div class="hl" style="top:386px"></div>
<div class="hl" style="top:424px"></div>
<div class="a" style="left:0;top:37px;width:51px;height:420px;background:#f0f0f0;border-right:1px solid #b4b4b4"></div>
<div class="hl" style="left:0;width:50px;top:44px;background:#d2d2d2"></div>
<div class="a" style="left:51px;top:37px;width:121px;height:7px;overflow:hidden"><div class="cell" style="left:0;top:-31px">Riya</div></div>
<div class="rh" style="top:44px;background:#e1e1e1;color:#1e7145">3</div>
<div class="cell" style="left:51px;top:44px;letter-spacing:-0.76px">Sonia</div>
<div class="cell" style="left:173px;top:44px">52</div>
<div class="cell" style="left:295px;top:44px">94</div>
<div class="cell" style="left:417px;top:44px">96</div>
<div class="cell" style="left:539px;top:44px">72</div>
<div class="cell" style="left:661px;top:44px">94</div>
<div class="cell" style="left:783px;top:44px">52</div>
<div class="cell" style="left:905px;top:44px">76</div>
<div class="rh" style="top:82px">4</div>
<div class="cell" style="left:51px;top:82px;letter-spacing:-0.56px">Pooja</div>
<div class="cell" style="left:173px;top:82px">87</div>
<div class="cell" style="left:295px;top:82px">68</div>
<div class="cell" style="left:417px;top:82px">67</div>
<div class="cell" style="left:539px;top:82px">95</div>
<div class="cell" style="left:661px;top:82px">54</div>
<div class="cell" style="left:783px;top:82px">79</div>
<div class="cell" style="left:905px;top:82px">72</div>
<div class="rh" style="top:120px">5</div>
<div class="cell" style="left:51px;top:120px;letter-spacing:-0.97px">Rakhi</div>
<div class="cell" style="left:173px;top:120px">55</div>
<div class="cell" style="left:295px;top:120px">74</div>
<div class="cell" style="left:417px;top:120px">53</div>
<div class="cell" style="left:539px;top:120px">81</div>
<div class="cell" style="left:661px;top:120px">82</div>
<div class="cell" style="left:783px;top:120px">93</div>
<div class="cell" style="left:905px;top:120px">73</div>
<div class="rh" style="top:158px">6</div>
<div class="cell" style="left:51px;top:158px;letter-spacing:-0.6px">Neelam</div>
<div class="cell" style="left:173px;top:158px">83</div>
<div class="cell" style="left:295px;top:158px">93</div>
<div class="cell" style="left:417px;top:158px">60</div>
<div class="cell" style="left:539px;top:158px">55</div>
<div class="cell" style="left:661px;top:158px">94</div>
<div class="cell" style="left:783px;top:158px">60</div>
<div class="cell" style="left:905px;top:158px">96</div>
<div class="rh" style="top:196px">7</div>
<div class="cell" style="left:51px;top:196px;letter-spacing:-0.68px">Sonu</div>
<div class="cell" style="left:173px;top:196px">76</div>
<div class="cell" style="left:295px;top:196px">83</div>
<div class="cell" style="left:417px;top:196px">82</div>
<div class="cell" style="left:539px;top:196px">51</div>
<div class="cell" style="left:661px;top:196px">76</div>
<div class="cell" style="left:783px;top:196px">90</div>
<div class="cell" style="left:905px;top:196px">64</div>
<div class="rh" style="top:234px">8</div>
<div class="cell" style="left:51px;top:234px;letter-spacing:-0.16px">Tushar</div>
<div class="cell" style="left:173px;top:234px">72</div>
<div class="cell" style="left:295px;top:234px">78</div>
<div class="cell" style="left:417px;top:234px">93</div>
<div class="cell" style="left:539px;top:234px">59</div>
<div class="cell" style="left:661px;top:234px">55</div>
<div class="cell" style="left:783px;top:234px">56</div>
<div class="cell" style="left:905px;top:234px">88</div>
<div class="rh" style="top:272px">9</div>
<div class="cell" style="left:51px;top:272px;letter-spacing:-0.08px">Kartik</div>
<div class="cell" style="left:173px;top:272px">65</div>
<div class="cell" style="left:295px;top:272px">88</div>
<div class="cell" style="left:417px;top:272px">81</div>
<div class="cell" style="left:539px;top:272px">55</div>
<div class="cell" style="left:661px;top:272px">74</div>
<div class="cell" style="left:783px;top:272px">87</div>
<div class="cell" style="left:905px;top:272px">77</div>
<div class="rh" style="top:310px">10</div>
<div class="cell" style="left:51px;top:310px;letter-spacing:-1.39px">Ramesh</div>
<div class="cell" style="left:173px;top:310px">95</div>
<div class="cell" style="left:295px;top:310px">51</div>
<div class="cell" style="left:417px;top:310px">84</div>
<div class="cell" style="left:539px;top:310px">74</div>
<div class="cell" style="left:661px;top:310px">74</div>
<div class="cell" style="left:783px;top:310px">50</div>
<div class="cell" style="left:905px;top:310px">72</div>
<div class="rh" style="top:348px">11</div>
<div class="cell" style="left:173px;top:348px">652</div>
<div class="cell" style="left:295px;top:348px">9</div>
<div class="cell" style="left:417px;top:348px">74.33333</div>
<div class="rh" style="top:386px">12</div>
<div class="rh" style="top:424px">13</div>
</div><!--/grid-->
<!-- ===== OVERLAY ===== -->
<div id="overlay" class="a" style="left:0;top:0;width:0;height:0">
<div class="a" style="left:49px;top:261px;width:125px;height:41px;border:2px solid #1e7145"></div>
<div class="a" style="left:169px;top:297px;width:8px;height:8px;background:#1e7145;border:1px solid #fff"></div>
<div class="a" style="left:1345px;top:218px;width:20px;height:455px;background:#f0f0f0"></div>
<svg style="left:1351px;top:223px" width="10" height="7"><path d="M0 7H9.500L4.750 0Z" fill="#5a5a5a"/></svg>
<div class="a" style="left:1351.500px;top:273px;width:9px;height:211px;border-radius:4.500px;background:#767676"></div>
<svg style="left:1351px;top:664px" width="10" height="7"><path d="M0 0H9.500L4.750 7Z" fill="#5a5a5a"/></svg>
<svg style="left:0;top:0" width="1365" height="727" viewBox="0 0 1365 727" fill="none" stroke="#fe0000" stroke-width="3">
<rect x="172.500" y="567.500" width="369" height="38" stroke-linejoin="round"/>
<path d="M283.8 443.6L264.0 558.6" stroke-linecap="round"/><path d="M261.5 573.0L259.5 557.8L268.4 559.4Z" fill="#fe0000" stroke="none"/>
<path d="M391.6 431.8L374.4 563.3" stroke-linecap="round"/><path d="M372.5 577.8L369.9 562.7L378.9 563.9Z" fill="#fe0000" stroke="none"/>
<path d="M513.9 442.7L496.7 558.3" stroke-linecap="round"/><path d="M494.6 572.7L492.3 557.6L501.2 558.9Z" fill="#fe0000" stroke="none"/>
</svg>
</div><!--/overlay-->
<!-- ===== SHEET TABS ===== -->
<div id="sheetbar" class="a" style="left:0;top:673px;width:1365px;height:32px;background:#efefef">
<svg style="left:28px;top:10px" width="8" height="12" fill="none" stroke="#a0a0a0" stroke-width="1.200" stroke-linecap="round" stroke-linejoin="round"><path d="M6.500 1L1.500 6L6.500 11"/></svg>
<svg style="left:60px;top:10px" width="8" height="12" fill="none" stroke="#a0a0a0" stroke-width="1.200" stroke-linecap="round" stroke-linejoin="round"><path d="M1.500 1L6.500 6L1.500 11"/></svg>
<div class="a" style="left:116px;top:-1px;width:86px;height:29px;background:#fff;border-radius:0 0 5px 5px;box-shadow:0 0 2px rgba(0,0,0,.18)"></div>
<div class="t" style="left:123.6px;top:8.1px;font-size:12.8px;letter-spacing:0.80px;color:#1b1b1b;-webkit-text-stroke:.45px #1b1b1b">Worksheet</div>
<div class="a" style="left:124px;top:23px;width:68.500px;height:2px;background:#107c41"></div>
<div class="a" style="left:205px;top:7px;width:1px;height:18px;background:#c8c8c8"></div>
<svg style="left:248px;top:9.500px" width="11" height="11" fill="none" stroke="#3b3b3b" stroke-width="1.100"><path d="M5.500 0V11M0 5.500H11"/></svg>
<svg style="left:820.500px;top:10px" width="3" height="11" fill="#a0a0a0"><circle cx="1.400" cy="1.400" r="1"/><circle cx="1.400" cy="5.400" r="1"/><circle cx="1.400" cy="9.400" r="1"/></svg>
<svg style="left:843px;top:10.500px" width="7" height="10"><path d="M6.500 0V10L0 5Z" fill="#5a5a5a"/></svg>
<div class="a" style="left:855.500px;top:11px;width:455px;height:9px;border-radius:4.500px;background:#767676"></div>
<svg style="left:1336px;top:10.500px" width="7" height="10"><path d="M0 0V10L6.500 5Z" fill="#5a5a5a"/></svg>
</div><!--/sheetbar-->
<!-- ===== STATUS BAR ===== -->
<div id="status" class="a" style="left:0;top:704px;width:1365px;height:23px;background:#f3f3f3">
<div class="a" style="left:0;top:1px;width:1365px;height:1px;background:#fbfbfb"></div><!--SEPLINE-->
<div class="t" style="left:11.6px;top:7.2px;font-size:11.5px;letter-spacing:-0.29px;color:#444">Ready</div>
<svg style="left:61px;top:4px" width="17" height="16" viewBox="0 0 17 16" fill="none" stroke="#333" stroke-width="1" stroke-linecap="round" stroke-linejoin="round">
<circle cx="6.900" cy="3" r="1.700"/><path d="M1.500 5Q1 3.500 3 3.800L6.900 5.200L11 3.800Q13 3.500 12.500 5Q11 6.500 9.300 7V9.500M1.500 5Q3 6.500 4.500 7L4 11.500Q3.600 13 3 14Q3.500 15 5 14.300"/><path d="M7.500 11.700L10.500 14.700L15.700 9.200"/></svg>
<div class="t" style="left:79.6px;top:7.2px;font-size:11.5px;letter-spacing:0.06px;color:#444">Accessibility: Good to go</div>
<div class="a" style="left:1066px;top:2px;width:40px;height:21px;background:#dadada"></div>
<svg style="left:1079px;top:5px" width="13" height="13" viewBox="0 0 13 13" fill="none" stroke="#3b3b3b" stroke-width="1"><rect x=".5" y=".5" width="12" height="12"/><path d="M4.500 .5V12.500M8.500 .5V12.500M.5 4.500H12.500M.5 8.500H12.500"/></svg>
<svg style="left:1119px;top:5px" width="14" height="13" viewBox="0 0 14 13" fill="none" stroke="#3b3b3b" stroke-width="1"><rect x=".5" y=".5" width="13" height="12"/><rect x="3.500" y="3.500" width="7" height="6"/><path d="M5.500 5.500H8.500M5.500 7.500H8.500" stroke-width="1"/></svg>
<svg style="left:1158px;top:5px" width="15" height="13" viewBox="0 0 15 13" fill="none" stroke="#3b3b3b" stroke-width="1"><rect x=".5" y=".5" width="14" height="12"/><path d="M4.500 .5V6.500H10.500V.5"/></svg>
<svg style="left:1192px;top:11px" width="8" height="2"><path d="M0 .5H7" stroke="#3b3b3b" stroke-width="1"/></svg>
<div class="a" style="left:1205px;top:11px;width:100px;height:1px;background:#7a7a7a"></div>
<div class="a" style="left:1255px;top:9px;width:1px;height:5px;background:#7a7a7a"></div>
<div class="a" style="left:1267px;top:6px;width:6px;height:11px;background:#4a4a4a;border-radius:1px"></div>
<svg style="left:1310px;top:7px" width="9" height="9" fill="none" stroke="#3b3b3b" stroke-width="1"><path d="M4.500 .5V8.500M.5 4.500H8.500"/></svg>
<div class="t" style="left:1331.6px;top:7.2px;font-size:11.5px;letter-spacing:-0.40px;color:#444">190%</div>
</div><!--/status-->
</body>
</html>
